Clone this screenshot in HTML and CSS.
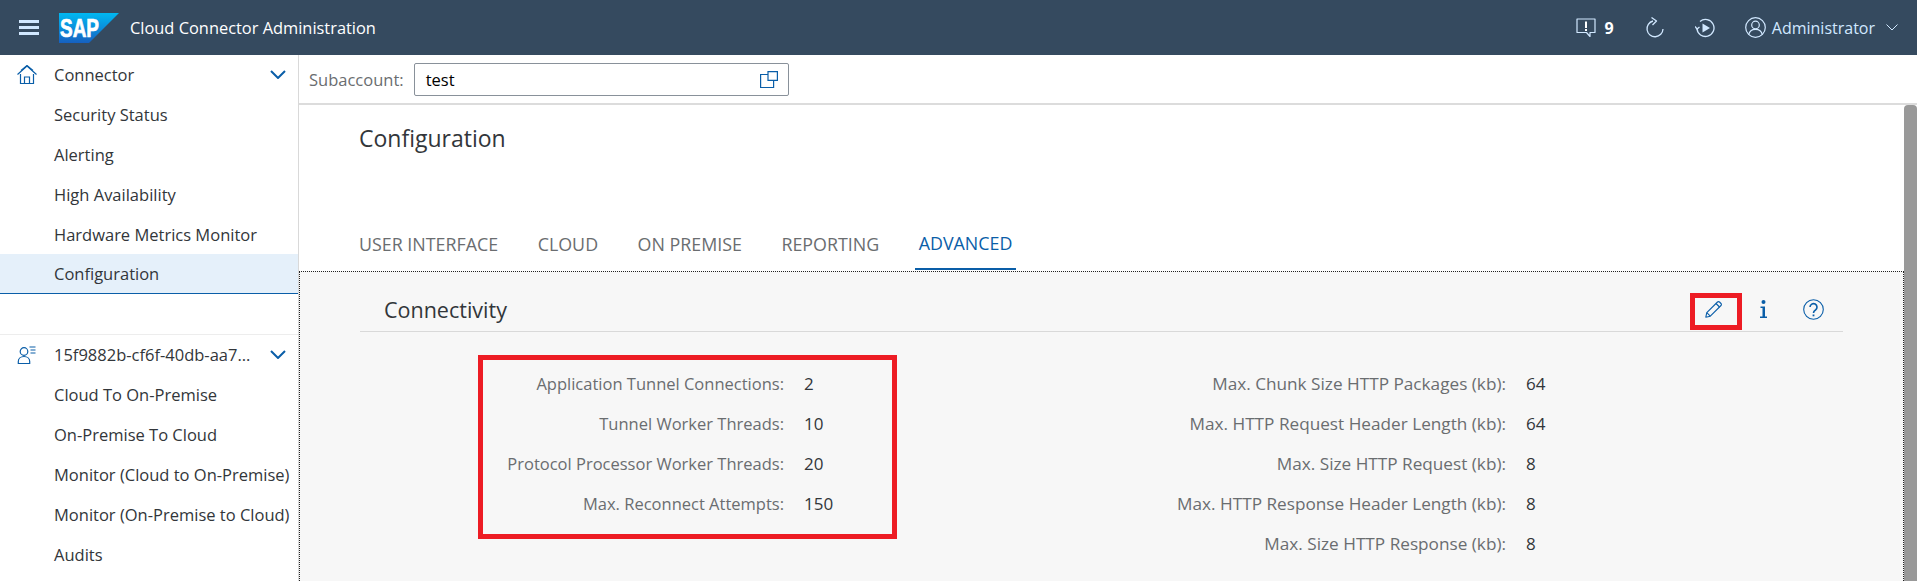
FILE: index.html
```html
<!DOCTYPE html>
<html lang="en">
<head>
    <meta charset="UTF-8">
    <title>Cloud Connector Administration</title>
    <link rel="stylesheet" href="styles.css">
</head>
<body>
    <header class="shell-bar">
        <svg class="menu-icon" width="20" height="15" viewBox="0 0 20 15"><path d="M0 1.500h20M0 7.500h20M0 13.500h20" stroke="#d1e8ff" stroke-width="3"/></svg>
        <svg class="logo" width="60" height="30" viewBox="0 0 60 30">
            <defs>
                <linearGradient id="sapBlue" x1="0" y1="0" x2="0" y2="1">
                    <stop offset="0" stop-color="#00b8f1"/>
                    <stop offset="0.5" stop-color="#0a8fdc"/>
                    <stop offset="1" stop-color="#1660c0"/>
                </linearGradient>
            </defs>
            <polygon points="0,0 60,0 30,30 0,30" fill="url(#sapBlue)"/>
            <text x="1" y="24" class="logo-text" textLength="39" lengthAdjust="spacingAndGlyphs">SAP</text>
        </svg>
        <span class="shell-title">Cloud Connector Administration</span>
        <div class="shell-actions">
            <svg class="feedback-icon" width="20" height="20" viewBox="0 0 20 20" fill="none" stroke="#d1e8ff" stroke-width="1.200">
                <path d="M1 1h18v13.500h-5v4l-3.500-4h-9.500z" stroke-linejoin="round"/>
                <path d="M10 3.500v6.500M10 11v2" stroke="#ffffff" stroke-width="2"/>
            </svg>
            <span class="notice-count">9</span>
            <svg class="refresh-icon" width="19" height="21" viewBox="0 0 19 21" fill="none" stroke="#d1e8ff" stroke-width="1.300">
                <path d="M8 4a8 8 0 1 0 10 8"/>
                <path d="M6.500 0.500l5 3.500-4 4" stroke-linejoin="round"/>
            </svg>
            <svg class="replay-icon" width="20" height="20" viewBox="0 0 20 20" fill="none" stroke="#d1e8ff" stroke-width="1.300">
                <path d="M5 3.500a8.500 8.500 0 1 1-3 7"/>
                <path d="M0 8.500l2 2.500 2.500-2"/>
                <path d="M7.500 5.500l7.500 4.500-7.500 4.500z" fill="#d1e8ff" stroke="none"/>
            </svg>
            <svg class="user-icon" width="21" height="21" viewBox="0 0 21 21" fill="none" stroke="#d1e8ff" stroke-width="1.200">
                <circle cx="10.500" cy="10.500" r="9.800"/>
                <circle cx="10.500" cy="8" r="3.800"/>
                <path d="M3.800 17.500c.5-3 3-5.200 6.700-5.200s6.200 2.200 6.700 5.200"/>
            </svg>
            <span class="user-name">Administrator</span>
            <svg class="user-chevron" width="12" height="7" viewBox="0 0 12 7" fill="none" stroke="#d1e8ff" stroke-width="1"><path d="M.5.500l5.500 5.500 5.500-5.500"/></svg>
        </div>
    </header>

    <div class="main">
        <nav class="side-nav">
            <div class="nav-head">
                <svg class="nav-icon" width="20" height="19" viewBox="0 0 20 19" fill="none" stroke="#0a5ea8" stroke-width="1.200">
                    <path d="M.5 9.500l9.500-8.500 9.500 8.500"/>
                    <path d="M3.500 9v9.500h13v-9.500"/>
                    <path d="M7.500 18.500v-6.500h5v6.500"/>
                    <path d="M4 5.500l6-5 6 5"/>
                </svg>
                <span class="nav-text">Connector</span>
                <svg class="nav-chevron" width="16" height="9" viewBox="0 0 16 9" fill="none" stroke="#0a5ea8" stroke-width="2"><path d="M1 1l7 7 7-7"/></svg>
            </div>
            <a class="nav-item">Security Status</a>
            <a class="nav-item">Alerting</a>
            <a class="nav-item">High Availability</a>
            <a class="nav-item">Hardware Metrics Monitor</a>
            <a class="nav-item selected">Configuration</a>
            <div class="nav-gap"></div>
            <div class="nav-head">
                <svg class="nav-icon" width="19" height="18" viewBox="0 0 19 18" fill="none" stroke="#0a5ea8" stroke-width="1.200">
                    <circle cx="6.500" cy="5.500" r="3.800"/>
                    <path d="M.8 17.500v-2c0-3 2.500-5 5.700-5s5.700 2 5.700 5v2z"/>
                    <path d="M12 1h6M13 4h5M13 7h5"/>
                </svg>
                <span class="nav-text">15f9882b-cf6f-40db-aa7...</span>
                <svg class="nav-chevron" width="16" height="9" viewBox="0 0 16 9" fill="none" stroke="#0a5ea8" stroke-width="2"><path d="M1 1l7 7 7-7"/></svg>
            </div>
            <a class="nav-item">Cloud To On-Premise</a>
            <a class="nav-item">On-Premise To Cloud</a>
            <a class="nav-item">Monitor (Cloud to On-Premise)</a>
            <a class="nav-item">Monitor (On-Premise to Cloud)</a>
            <a class="nav-item">Audits</a>
        </nav>

        <div class="content">
            <div class="subaccount-bar">
                <label class="subaccount-label">Subaccount:</label>
                <div class="subaccount-input">
                    <span>test</span>
                    <svg width="18" height="17" viewBox="0 0 18 17" fill="none" stroke="#0a5ea8" stroke-width="1.200">
                        <path d="M8 3.500h-7.400v13h13v-7"/>
                        <path d="M8 .6h9.400v8.800h-9.400z"/>
                    </svg>
                </div>
            </div>

            <div class="page">
                <div class="page-scroll">
                    <h1 class="page-title">Configuration</h1>
                    <div class="tabs">
                        <a class="tab">USER INTERFACE</a>
                        <a class="tab">CLOUD</a>
                        <a class="tab">ON PREMISE</a>
                        <a class="tab">REPORTING</a>
                        <a class="tab active">ADVANCED</a>
                    </div>
                    <section class="panel">
                        <div class="panel-head">
                            <h2 class="panel-title">Connectivity</h2>
                            <div class="panel-tools">
                                <svg width="18" height="18" viewBox="0 0 18 18" fill="none" stroke="#0a5ea8" stroke-width="1.100">
                                    <path d="M.8 17.200l1-4.500 10.700-10.700a1.400 1.400 0 0 1 2 0l1.500 1.500a1.400 1.400 0 0 1 0 2l-10.700 10.700z" stroke-linejoin="round"/>
                                    <path d="M11 3.500l3.500 3.500M1.800 12.700l3.500 3.500"/>
                                </svg>
                                <svg class="info-icon" width="7" height="18" viewBox="0 0 7 18" fill="#0a5ea8">
                                    <circle cx="3.500" cy="2" r="2"/>
                                    <path d="M.5 6.500h4.500v10h2v1.500h-7v-1.500h2.500v-8.500h-2z"/>
                                </svg>
                                <svg class="help-icon" width="21" height="21" viewBox="0 0 21 21" fill="none" stroke="#0a5ea8" stroke-width="1.100">
                                    <circle cx="10.500" cy="10.500" r="9.800"/>
                                    <path d="M7 8a3.500 3.500 0 1 1 5.500 3c-1.300.8-2 1.500-2 3" stroke-width="1.600"/>
                                    <path d="M10.500 15.500v1.800" stroke-width="1.800"/>
                                </svg>
                            </div>
                        </div>
                        <div class="form-cols">
                            <dl class="form form-left">
                                <dt>Application Tunnel Connections:</dt><dd>2</dd>
                                <dt>Tunnel Worker Threads:</dt><dd>10</dd>
                                <dt>Protocol Processor Worker Threads:</dt><dd>20</dd>
                                <dt>Max. Reconnect Attempts:</dt><dd>150</dd>
                            </dl>
                            <dl class="form form-right">
                                <dt>Max. Chunk Size HTTP Packages (kb):</dt><dd>64</dd>
                                <dt>Max. HTTP Request Header Length (kb):</dt><dd>64</dd>
                                <dt>Max. Size HTTP Request (kb):</dt><dd>8</dd>
                                <dt>Max. HTTP Response Header Length (kb):</dt><dd>8</dd>
                                <dt>Max. Size HTTP Response (kb):</dt><dd>8</dd>
                            </dl>
                        </div>
                    </section>
                </div>
                <div class="scrollbar"><div class="scrollbar-thumb"></div></div>
            </div>
        </div>
    </div>

    <!-- red marks drawn on top of the screenshot -->
    <div class="mark mark-form"></div>
    <div class="mark mark-edit"></div>
</body>
</html>
```

FILE: styles.css
```css
* {
    box-sizing: border-box;
}
html, body {
    height: 100%;
}
body {
    margin: 0;
    overflow: hidden;
    position: relative;
    font-family: 'Open Sans', 'Liberation Sans', sans-serif;
    font-size: 16.5px;
    color: #32363a;
    background-color: #ffffff;
}
svg {
    display: block;
    flex: none;
}

/* top bar */
.shell-bar {
    height: 55px;
    display: flex;
    align-items: center;
    padding-left: 19px;
    background-color: #354a5f;
    color: #ffffff;
}
.logo {
    margin-left: 20px;
    margin-top: 1px;
}
.logo-text {
    font-family: 'Liberation Sans', sans-serif;
    font-weight: 700;
    font-size: 25px;
    fill: #ffffff;
    stroke: #ffffff;
    stroke-width: 0.7px;
}
.shell-title {
    margin-left: 11px;
    font-size: 16.4px;
}
.shell-actions {
    margin-left: auto;
    padding-right: 19px;
    display: flex;
    align-items: center;
    color: #d1e8ff;
}
.notice-count {
    margin-left: 9px;
    font-size: 16px;
    font-weight: 700;
    color: #ffffff;
}
.refresh-icon {
    margin-left: 31px;
}
.replay-icon {
    margin-left: 31px;
}
.user-icon {
    margin-left: 30px;
}
.user-name {
    margin-left: 6px;
    font-size: 16px;
}
.user-chevron {
    margin-left: 11px;
}

/* left navigation */
.main {
    display: flex;
    height: 526px;
}
.side-nav {
    width: 299px;
    flex: none;
    border-right: 1px solid #d9d9d9;
    overflow: hidden;
}
.nav-head {
    height: 39px;
    display: flex;
    align-items: center;
    padding: 0 12px 0 17px;
}
.nav-text {
    margin-left: 17px;
    flex: 1;
}
.nav-head svg.nav-icon {
    width: 20px;
}
.nav-item {
    display: flex;
    align-items: center;
    height: 40px;
    padding-left: 54px;
}
.nav-item.selected {
    background-color: #e5f0fa;
    border-bottom: 1px solid #0a5ea8;
}
.nav-gap {
    height: 41px;
    border-bottom: 1px solid #ededed;
}

/* right side */
.content {
    flex: 1;
    min-width: 0;
    display: flex;
    flex-direction: column;
}
.subaccount-bar {
    height: 50px;
    flex: none;
    display: flex;
    align-items: center;
    padding-left: 10px;
    border-bottom: 2px solid #dcdcdc;
}
.subaccount-label {
    color: #6a6d70;
}
.subaccount-input {
    margin-left: 10px;
    width: 375px;
    height: 33px;
    display: flex;
    align-items: center;
    justify-content: space-between;
    padding: 0 10px 0 11px;
    border: 1px solid #89919a;
    border-radius: 2px;
    background-color: #ffffff;
    color: #000000;
}
.page {
    flex: 1;
    min-height: 0;
    display: flex;
}
.page-scroll {
    flex: 1;
    min-width: 0;
}
.page-title {
    margin: 0;
    padding: 19px 0 0 60px;
    height: 109px;
    font-size: 23px;
    font-weight: 400;
    line-height: 28px;
}
.tabs {
    height: 57px;
    display: flex;
    gap: 31.5px;
    padding-left: 56px;
}
.tab {
    height: 56px;
    padding: 4px 4px 0;
    display: flex;
    align-items: center;
    color: #6a6d70;
    font-size: 17.85px;
}
.tab.active {
    color: #0a5ea8;
    border-bottom: 2px solid #0a5ea8;
}
.panel {
    height: 310px;
    padding: 0 60px;
    background-color: #f7f7f7;
    border-top: 1px dotted #222222;
    border-left: 1px dotted #222222;
    border-right: 1px dotted #222222;
}
.panel-head {
    height: 60px;
    display: flex;
    align-items: center;
    padding: 15px 0 0 24px;
    border-bottom: 1px solid #d9d9d9;
}
.panel-title {
    margin: 0;
    font-size: 21.5px;
    font-weight: 400;
}
.panel-tools {
    margin-left: auto;
    padding-right: 19px;
    display: flex;
    align-items: center;
}
.info-icon {
    margin-left: 37px;
}
.help-icon {
    margin-left: 36px;
}
.form-cols {
    display: flex;
    padding-top: 31px;
}
.form {
    margin: 0;
    display: grid;
    grid-auto-rows: 40px;
    align-items: center;
    column-gap: 20px;
}
.form-left {
    grid-template-columns: 424px 60px;
}
.form-right {
    margin-left: 158px;
    grid-template-columns: 484px 60px;
}
.form dt {
    text-align: right;
    color: #6a6d70;
}
.form-right dt {
    font-size: 17.2px;
}
.form dd {
    margin: 0;
    font-size: 17px;
}
.scrollbar {
    width: 13px;
    flex: none;
    background-color: #ffffff;
}
.scrollbar-thumb {
    height: 100%;
    background-color: #999999;
    border-radius: 4px 4px 0 0;
}

/* annotations */
.mark {
    position: absolute;
    border: 5px solid #ed1c24;
}
.mark-form {
    left: 478px;
    top: 355px;
    width: 419px;
    height: 184px;
}
.mark-edit {
    left: 1690px;
    top: 293px;
    width: 52px;
    height: 37px;
}
```
